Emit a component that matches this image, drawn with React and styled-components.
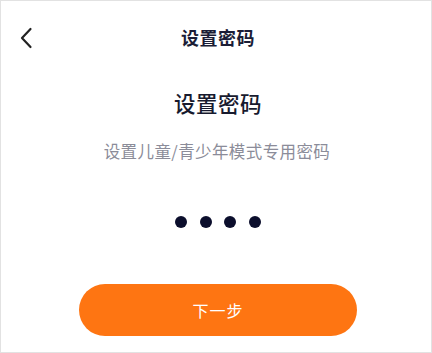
import React from "react";
import styled, { createGlobalStyle } from "styled-components";

const GlobalStyle = createGlobalStyle`
  html, body {
    margin: 0;
    padding: 0;
    background: #ffffff;
  }
  body {
    font-family: "Noto Sans CJK SC", "Noto Sans", sans-serif;
  }
`;

const Frame = styled.div`
  width: 432px;
  height: 353px;
  box-sizing: border-box;
  border: 1px solid #e2e2e2;
  background: #fff;
  display: flex;
  flex-direction: column;
  align-items: center;
`;

const Header = styled.header`
  position: relative;
  width: 100%;
  height: 72px;
  display: flex;
  align-items: center;
  justify-content: center;
`;

const BackButton = styled.button`
  position: absolute;
  left: 14px;
  top: 24px;
  width: 22px;
  height: 26px;
  padding: 0;
  border: none;
  background: none;
  display: flex;
  align-items: center;
  justify-content: center;
  cursor: pointer;
`;

const HeaderTitle = styled.h1`
  margin: 0 0 0 4px;
  font-size: 18px;
  font-weight: 700;
  color: #1b1d36;
  letter-spacing: 0.5px;
`;

const Heading = styled.h2`
  margin: 15px 0 0 4px;
  font-size: 21.5px;
  line-height: 30px;
  font-weight: 500;
  color: #171a2e;
  letter-spacing: 0.5px;
`;

const Subtitle = styled.p`
  margin: 22px 0 0 2px;
  font-size: 16.5px;
  line-height: 22px;
  color: #8b8c99;
  letter-spacing: 0.4px;
`;

const Dots = styled.div`
  margin-top: 54px;
  display: flex;
  gap: 12.5px;
  padding-left: 4px;
`;

const Dot = styled.span`
  width: 12px;
  height: 12px;
  border-radius: 50%;
  background: ${(p) => (p.$filled ? "#0b0e2c" : "#e4e5ea")};
`;

const NextButton = styled.button`
  margin-top: 56px;
  margin-left: 4px;
  width: 278px;
  height: 52px;
  border: none;
  border-radius: 26px;
  background: #fe7512;
  color: #fff;
  font-family: inherit;
  font-size: 16px;
  letter-spacing: 1px;
  cursor: pointer;
`;

export default function App() {
  const code = [1, 2, 3, 4];
  return (
    <>
      <GlobalStyle />
      <Frame>
        <Header>
          <BackButton aria-label="返回">
            <svg width="14" height="22" viewBox="0 0 14 22" fill="none">
              <path
                d="M11.5 2 L3 11 L11.5 20"
                stroke="#222"
                strokeWidth="2.2"
                strokeLinecap="round"
                strokeLinejoin="round"
              />
            </svg>
          </BackButton>
          <HeaderTitle>设置密码</HeaderTitle>
        </Header>
        <Heading>设置密码</Heading>
        <Subtitle>设置儿童/青少年模式专用密码</Subtitle>
        <Dots>
          {code.map((d) => (
            <Dot key={d} $filled />
          ))}
        </Dots>
        <NextButton>下一步</NextButton>
      </Frame>
    </>
  );
}
